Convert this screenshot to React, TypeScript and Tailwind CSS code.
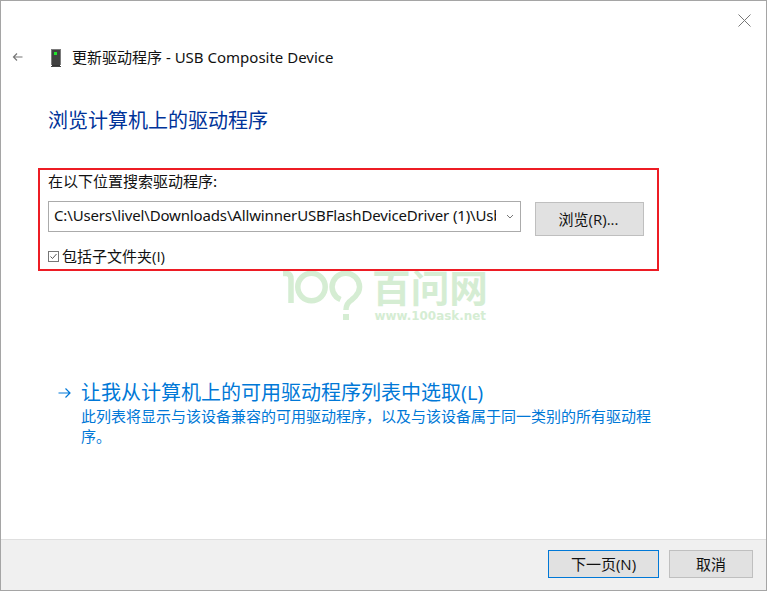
import React from 'react';

const CJK = "font-['Noto_Sans_CJK_SC',sans-serif]";
const UI = "font-['Open_Sans','Noto_Sans_CJK_SC',sans-serif]";

function Watermark() {
  return (
    <svg
      className="absolute left-[280px] top-[265px]"
      width="210"
      height="60"
      viewBox="280 266 210 60"
      fill="none"
      stroke="#d5edd3"
      strokeWidth="5.5"
    >
      <path d="M282 273.500H286Q290 274 290 279V303" />
      <circle cx="310.500" cy="287" r="13.700" />
      <path d="M339.500 299.500A13.700 13.700 0 1 1 357.500 292Q355 296.500 350.500 300Q345 303.500 345 310" />
      <path d="M342 317H348" strokeWidth="6" />
      <text
        x="371"
        y="302"
        textLength="116"
        lengthAdjust="spacingAndGlyphs"
        fill="#d5edd3"
        stroke="none"
        className="font-['Noto_Sans_CJK_SC',sans-serif] text-[38px] font-bold"
      >
        百问网
      </text>
      <text
        x="373.500"
        y="320"
        textLength="111.500"
        lengthAdjust="spacingAndGlyphs"
        fill="#d5edd3"
        stroke="none"
        className="font-['DejaVu_Sans',sans-serif] text-[12px] font-bold"
      >
        www.100ask.net
      </text>
    </svg>
  );
}

function DeviceIcon() {
  return (
    <svg width="12" height="20" viewBox="0 0 12 20" shapeRendering="crispEdges">
      <rect x="1" y="1" width="10" height="16" fill="#7b7b7b" />
      <rect x="2" y="2" width="8" height="15" fill="#414141" />
      <rect x="4" y="4" width="3" height="3" fill="#20e52c" />
      <rect x="2" y="17" width="8" height="1" fill="#353535" />
      <rect x="1" y="18" width="10" height="1" fill="#444" />
    </svg>
  );
}

export default function App() {
  return (
    <div
      className={`relative flex h-[591px] w-[767px] flex-col overflow-hidden border border-[#a5a5a5] bg-white text-[15px] text-[#111] ${UI}`}
    >
      <Watermark />
      <div className="flex h-[38px] shrink-0 justify-end pr-[15px] pt-[13px]">
        <svg width="13" height="13" viewBox="0 0 13 13" stroke="#777" strokeWidth="1">
          <path d="M.5 .5L12.500 12.500M12.500 .5L.5 12.500" />
        </svg>
      </div>

      <header className="flex h-[38px] shrink-0 items-center pl-[11px]">
        <svg width="12" height="10" viewBox="0 0 12 10" fill="none" stroke="#777" className="-mt-[2px]">
          <path d="M1.500 5H10.500M5 1.500L1.500 5L5 8.500" strokeWidth="1.200" />
        </svg>
        <div className="ml-[26px] flex">
          <DeviceIcon />
        </div>
        <h1 className="-mt-[2px] ml-[10px] flex whitespace-pre leading-5">
          <span className={CJK}>更新驱动程序</span>
          <span className="font-['Noto_Sans',sans-serif]"> - USB Composite Device</span>
        </h1>
      </header>

      <main className="flex grow flex-col items-start">
        <h2 className={`ml-[47px] mt-[29px] text-[20px] leading-[28px] text-[#003399] ${CJK}`}>
          浏览计算机上的驱动程序
        </h2>

        <section className="relative ml-[37px] mt-[34px] flex h-[103px] w-[621px] shrink-0 flex-col border-2 border-[#ed1c24] pl-2">
          <label className={`mt-px leading-5 ${CJK}`}>在以下位置搜索驱动程序:</label>
          <div className="mt-[10px] flex">
            <div className="flex h-[31px] w-[473px] items-center border border-[#ababab] bg-white pl-[5px]">
              <span className="-mt-[3px] w-[442px] overflow-hidden whitespace-nowrap font-['Noto_Sans',sans-serif] leading-5 tracking-[-0.15px]">
                C:\Users\livel\Downloads\AllwinnerUSBFlashDeviceDriver (1)\Usb
              </span>
              <svg width="8" height="6" viewBox="0 0 8 6" fill="none" stroke="#777" className="ml-[10px]">
                <path d="M1 1L4 4L7 1" />
              </svg>
            </div>
            <button className="ml-[14px] mt-px h-[34px] w-[109px] border border-[#bfbfbf] bg-[#e1e1e1] pr-[2px] leading-5">
              浏览(R)...
            </button>
          </div>
          <div className="mt-[10px] flex items-center leading-5">
            <svg width="11" height="11" viewBox="0 0 11 11" fill="none" stroke="#777">
              <rect x=".5" y=".5" width="10" height="10" />
              <path d="M2.500 5.500L4.500 7.500L8.500 3" stroke="#555" />
            </svg>
            <span className="ml-[3px]">包括子文件夹(I)</span>
          </div>
        </section>

        <section className="ml-[56px] mt-[109px] flex text-[#0078d7]">
          <svg width="14" height="12" viewBox="0 0 14 12" fill="none" stroke="#0078d7" className="mt-[7px]">
            <path d="M1.500 6H13M8.500 1.500L13 6L8.500 10.500" strokeWidth="1.200" />
          </svg>
          <div className="ml-[10px] w-[575px]">
            <h3 className="whitespace-nowrap text-[20px] leading-[26px]">
              让我从计算机上的可用驱动程序列表中选取(L)
            </h3>
            <p className={`leading-5 ${CJK}`}>
              此列表将显示与该设备兼容的可用驱动程序，以及与该设备属于同一类别的所有驱动程序。
            </p>
          </div>
        </section>
      </main>

      <footer className="flex h-[51px] shrink-0 justify-end gap-[10px] border-t border-[#dfdfdf] bg-[#f0f0f0] pr-[13px] pt-[10px]">
        <button className="h-[28px] w-[111px] border border-[#0078d7] bg-[#e1e1e1] leading-5">下一页(N)</button>
        <button className="h-[28px] w-[84px] border border-[#bfbfbf] bg-[#e1e1e1] leading-5">取消</button>
      </footer>
    </div>
  );
}
